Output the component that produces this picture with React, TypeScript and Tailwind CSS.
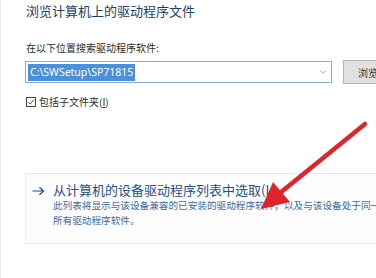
import { ChevronDown } from "lucide-react";

const cjk = "font-['Noto_Sans_CJK_SC','Noto_Sans',sans-serif]";

export default function App() {
  return (
    <div className={`relative w-[376px] h-[278px] overflow-hidden bg-white flex ${cjk}`}>
      {/* faint window edge */}
      <div className="w-[4px] h-full bg-[#f2f6fa] border-r border-[#e9eef3]" />

      <div className="flex-1 flex flex-col pl-[25px] pt-[2px]">
        <h1 className="text-[13px] leading-[17px] text-[#1e3d6b] font-normal whitespace-nowrap">
          浏览计算机上的驱动程序文件
        </h1>

        <p className="mt-[22px] text-[10px] leading-[14px] text-[#2b2b2b] whitespace-nowrap">
          在以下位置搜索驱动程序软件:
        </p>

        <div className="mt-[5px] flex items-center">
          <div className="-ml-[1px] w-[307px] h-[22px] border border-[#88aed6] bg-white flex items-center pl-[2px] pr-[3px]">
            <span className="h-[17px] px-[2px] bg-[#4a90dc] text-white text-[10.5px] leading-[17px] font-['Noto_Sans',sans-serif] whitespace-nowrap">
              C:\SWSetup\SP71815
            </span>
            <div className="flex-1" />
            <ChevronDown className="w-[10px] h-[10px] text-[#707070]" strokeWidth={1.5} />
          </div>
          <div className="ml-[11px] h-[24px] w-[60px] shrink-0 bg-[#e1e1e1] border border-[#b4b4b4] flex items-center pl-[14px] text-[10px] text-[#333] whitespace-nowrap">
            浏览(R)...
          </div>
        </div>

        <label className="mt-[11px] flex items-center gap-[3px] text-[10px] leading-[14px] text-[#2b2b2b] whitespace-nowrap">
          <span className="w-[10px] h-[10px] border border-[#444] flex items-center justify-center">
            <svg viewBox="0 0 10 10" className="w-[8px] h-[8px]">
              <path d="M1.5 5.2 L4 7.6 L8.6 2" fill="none" stroke="#333" strokeWidth="1.1" />
            </svg>
          </span>
          <span>
            包括子文件夹(<span className="underline">I</span>)
          </span>
        </label>

        <div className="mt-[64px] -ml-[1px] mr-[-20px] h-[71px] border border-[#e6eaee] bg-[#fdfdfe] flex items-start pl-[6px] pt-[7px]">
          <svg viewBox="0 0 14 10" className="mt-[5px] w-[13px] h-[10px] shrink-0">
            <path d="M0.5 5 H12.5 M8 1 L12.5 5 L8 9" fill="none" stroke="#1f4e8c" strokeWidth="1.3" />
          </svg>
          <div className="ml-[8px] flex flex-col">
            <span className="text-[13px] leading-[17px] text-[#24508f] whitespace-nowrap">
              从计算机的设备驱动程序列表中选取(L)
            </span>
            <span className="text-[9.65px] leading-[15px] text-[#3a68a8] whitespace-nowrap">
              此列表将显示与该设备兼容的已安装的驱动程序软件，以及与该设备处于同一类别的
            </span>
            <span className="text-[9.65px] leading-[15px] text-[#3a68a8] whitespace-nowrap">
              所有驱动程序软件。
            </span>
          </div>
        </div>
      </div>

      {/* red annotation arrow */}
      <svg className="absolute inset-0 pointer-events-none" width="376" height="278" viewBox="0 0 376 278">
        <line x1="365" y1="124" x2="280" y2="193" stroke="#e0242b" strokeWidth="4.5" strokeLinecap="round" />
        <polygon points="261,209 273,182 290,202" fill="#e0242b" />
      </svg>
    </div>
  );
}
